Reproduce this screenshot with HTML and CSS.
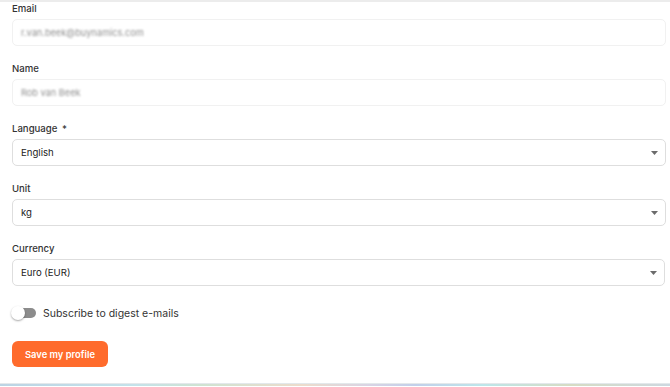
FILE: index.html
```html
<!DOCTYPE html>
<html lang="en">
<head>
  <meta charset="UTF-8">
  <meta name="viewport" content="width=device-width, initial-scale=1.0">
  <title>My profile</title>
  <link rel="stylesheet" href="styles.css">
</head>
<body>
  <div class="page">
    <form class="profile-form">
      <div class="field">
        <label>Email</label>
        <div class="input disabled"><span class="blurred">r.van.beek@buynamics.com</span></div>
      </div>
      <div class="field">
        <label>Name</label>
        <div class="input disabled"><span class="blurred">Rob van Beek</span></div>
      </div>
      <div class="field">
        <label>Language <span class="req">*</span></label>
        <div class="input select">
          <span>English</span>
          <svg class="caret" width="7" height="4" viewBox="0 0 7 4"><path d="M0 0h7L3.5 4z" fill="#6b6b6b"/></svg>
        </div>
      </div>
      <div class="field">
        <label>Unit</label>
        <div class="input select">
          <span>kg</span>
          <svg class="caret" width="7" height="4" viewBox="0 0 7 4"><path d="M0 0h7L3.5 4z" fill="#6b6b6b"/></svg>
        </div>
      </div>
      <div class="field currency">
        <label>Currency</label>
        <div class="input select">
          <span>Euro (EUR)</span>
          <svg class="caret" width="7" height="4" viewBox="0 0 7 4"><path d="M0 0h7L3.5 4z" fill="#6b6b6b"/></svg>
        </div>
      </div>

      <div class="toggle-row">
        <span class="toggle"><span class="knob"></span></span>
        <span class="toggle-label">Subscribe to digest e-mails</span>
      </div>

      <button type="button" class="save-btn">Save my profile</button>
    </form>
    <div class="footer-line"></div>
  </div>
</body>
</html>
```

FILE: styles.css
```css
body {
  margin: 0;
  padding: 0;
  font-family: "Inter", "Liberation Sans", sans-serif;
  color: #2b2b2b;
  background: #fff;
}

.page {
  min-height: 100vh;
  display: flex;
  flex-direction: column;
  border-top: 2px solid #ececec;
  box-sizing: border-box;
}

.profile-form {
  padding: 0 4px 0 12px;
  display: flex;
  flex-direction: column;
}

.field {
  display: flex;
  flex-direction: column;
  margin-bottom: 16px;
}

.field.currency {
  margin-bottom: 0;
}

.field label {
  font-size: 9.6px;
  line-height: 14px;
  font-weight: 500;
  color: #333;
  margin-bottom: 3px;
}

.req {
  margin-left: 2px;
}

.input {
  height: 27px;
  box-sizing: border-box;
  border: 1px solid #dedede;
  border-radius: 5px;
  display: flex;
  align-items: center;
  padding: 0 7px 0 8px;
  font-size: 9.6px;
  color: #222;
}

.input.disabled {
  border-color: #f1f1f1;
}

.blurred {
  display: inline-block;
  color: #8f8f8f;
  filter: blur(0.9px);
  font-size: 9.2px;
}

.select {
  justify-content: space-between;
}

.currency .input {
  margin-right: 1px;
}

.toggle-row {
  display: flex;
  align-items: center;
  height: 14px;
  margin-top: 20px;
}

.toggle {
  position: relative;
  width: 22px;
  height: 10px;
  border-radius: 5px;
  background: #8c8c8c;
  margin-left: 2px;
}

.knob {
  position: absolute;
  left: -3px;
  top: -2px;
  width: 14px;
  height: 14px;
  border-radius: 50%;
  background: #fff;
  box-shadow: 0 1px 2px rgba(0, 0, 0, 0.35);
}

.toggle-label {
  margin-left: 7px;
  font-size: 10.5px;
  color: #333;
}

.save-btn {
  align-self: flex-start;
  margin-top: 21px;
  height: 26px;
  padding: 0 13px;
  border: none;
  border-radius: 6px;
  background: #ff6b2c;
  color: #fff;
  font-family: inherit;
  font-size: 9.4px;
  font-weight: 600;
  cursor: pointer;
}

.footer-line {
  margin-top: auto;
  margin-bottom: 1px;
  height: 2px;
  border-top: 1px solid #e3e8eb;
  background: linear-gradient(90deg, #bcd4e4 0%, #c4e2ea 20%, #cfe3d2 30%, #ecdccc 45%, #d9d4e4 55%, #c2d0ea 62%, #bde6ea 72%, #d6dcc4 85%, #cdd8e0 100%);
}
```
